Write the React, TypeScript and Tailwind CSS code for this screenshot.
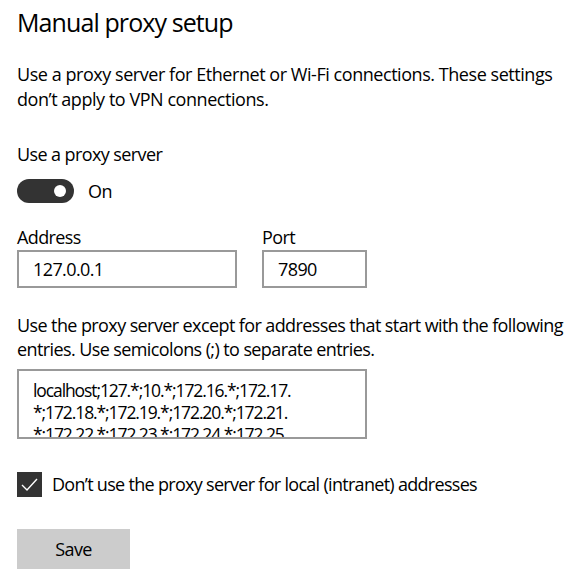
import React from "react";

const font = { fontFamily: '"Open Sans", "Noto Sans", sans-serif' };

function Toggle() {
  return (
    <div className="flex items-center">
      <div className="relative h-[24px] w-[57px] rounded-full bg-[#333333]">
        <div className="absolute right-[8px] top-[6px] h-[12px] w-[12px] rounded-full bg-white" />
      </div>
      <span className="ml-[14px] text-[18px] leading-[24px]">On</span>
    </div>
  );
}

function Field({ label, value, width }: { label: string; value: string; width: string }) {
  return (
    <div className="flex flex-col">
      <label className="text-[18px] leading-[24px]">{label}</label>
      <div className={`mt-[1px] flex h-[38px] items-center border-2 border-[#999999] px-[14px] text-[18px] ${width}`}>
        {value}
      </div>
    </div>
  );
}

export default function App() {
  return (
    <div
      className="h-[581px] w-[588px] overflow-hidden bg-white pl-[17px] pt-[4px] tracking-[-0.6px] text-black"
      style={font}
    >
      <h1 className="text-[25px] leading-[36px] tracking-[-0.9px]">Manual proxy setup</h1>

      <p className="mt-[22px] w-[566px] text-[18px] leading-[25px] tracking-[-0.45px]">
        Use a proxy server for Ethernet or Wi-Fi connections. These settings don’t apply to VPN connections.
      </p>

      <div className="mt-[30px] text-[18px] leading-[25px]">Use a proxy server</div>
      <div className="mt-[12px]">
        <Toggle />
      </div>

      <div className="mt-[22px] flex gap-[25px]">
        <Field label="Address" value="127.0.0.1" width="w-[220px]" />
        <Field label="Port" value="7890" width="w-[105px]" />
      </div>

      <p className="mt-[25px] w-[566px] text-[18px] leading-[24px]">
        Use the proxy server except for addresses that start with the following entries. Use semicolons (;) to
        separate entries.
      </p>

      <div className="mt-[8px] h-[70px] w-[350px] overflow-hidden border-2 border-[#999999] px-[14px] pt-[8px] text-[17.5px] leading-[22px] tracking-[-1.1px]">
        localhost;127.*;10.*;172.16.*;172.17.
        <br />
        *;172.18.*;172.19.*;172.20.*;172.21.
        <br />
        *;172.22.*;172.23.*;172.24.*;172.25.
      </div>

      <div className="mt-[33px] flex items-center">
        <div className="flex h-[25px] w-[25px] items-center justify-center bg-[#333333]">
          <svg width="19" height="19" viewBox="0 0 19 19" fill="none">
            <path d="M2 10 L7 15 L17 4" stroke="white" strokeWidth="1.4" />
          </svg>
        </div>
        <span className="ml-[10px] text-[18px] leading-[25px] tracking-[-0.7px]">
          Don’t use the proxy server for local (intranet) addresses
        </span>
      </div>

      <button className="mt-[32px] h-[40px] w-[113px] bg-[#cccccc] text-[18px] tracking-[-0.6px]" style={font}>
        Save
      </button>
    </div>
  );
}
